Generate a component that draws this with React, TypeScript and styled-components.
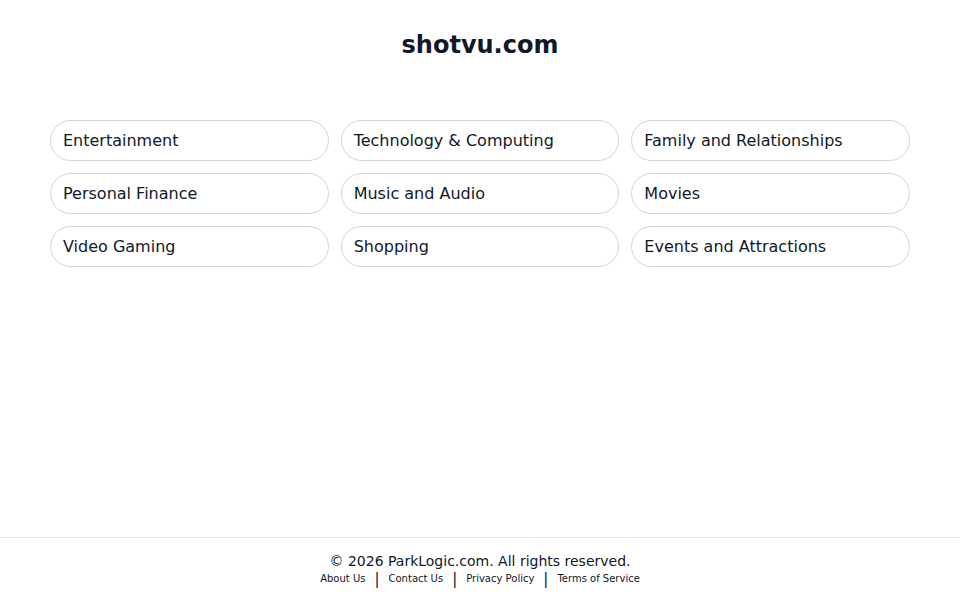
import React from "react";
import styled, { createGlobalStyle } from "styled-components";

const categories = [
  "Entertainment",
  "Technology & Computing",
  "Family and Relationships",
  "Personal Finance",
  "Music and Audio",
  "Movies",
  "Video Gaming",
  "Shopping",
  "Events and Attractions",
];

const links = ["About Us", "Contact Us", "Privacy Policy", "Terms of Service"];

const GlobalStyle = createGlobalStyle`
  html, body {
    margin: 0;
    padding: 0;
    background: #fff;
    font-family: "DejaVu Sans", Verdana, sans-serif;
    color: #111827;
  }
`;

const App = (): JSX.Element => (
  <>
    <GlobalStyle />
    <Page>
      <Main>
        <Title>shotvu.com</Title>
        <Grid>
          {categories.map((c) => (
            <Pill key={c} href="#">
              {c}
            </Pill>
          ))}
        </Grid>
      </Main>
      <Footer>
        <Copyright>© 2026 ParkLogic.com. All rights reserved.</Copyright>
        <LinkRow>
          {links.map((l, i) => (
            <React.Fragment key={l}>
              {i > 0 && <Sep>|</Sep>}
              <FooterLink href="#">{l}</FooterLink>
            </React.Fragment>
          ))}
        </LinkRow>
      </Footer>
    </Page>
  </>
);

const Page = styled.div`
  min-height: 600px;
  display: flex;
  flex-direction: column;
`;

const Main = styled.main`
  flex: 1;
  width: 860px;
  margin: 0 auto;
`;

const Title = styled.h1`
  margin: 30px 0 0;
  font-size: 24px;
  line-height: 30px;
  font-weight: bold;
  text-align: center;
  color: #111827;
`;

const Grid = styled.div`
  display: grid;
  grid-template-columns: repeat(3, 1fr);
  gap: 12px;
  margin-top: 60px;
`;

const Pill = styled.a`
  display: flex;
  align-items: center;
  height: 41px;
  box-sizing: border-box;
  padding: 0 12px;
  border: 1px solid #d4d4d8;
  border-radius: 21px;
  font-size: 16px;
  color: #111827;
  text-decoration: none;
`;

const Footer = styled.footer`
  border-top: 1px solid #e5e7eb;
  height: 63px;
  box-sizing: border-box;
  padding-top: 15px;
  text-align: center;
`;

const Copyright = styled.div`
  font-size: 14px;
  line-height: 17px;
  color: #111827;
`;

const LinkRow = styled.div`
  display: flex;
  justify-content: center;
  align-items: center;
  margin-top: 1px;
  line-height: 16px;
`;

const FooterLink = styled.a`
  font-size: 10px;
  color: #111827;
  text-decoration: none;
`;

const Sep = styled.span`
  font-size: 15px;
  margin: 0 9px;
  color: #111827;
`;

export default App;
